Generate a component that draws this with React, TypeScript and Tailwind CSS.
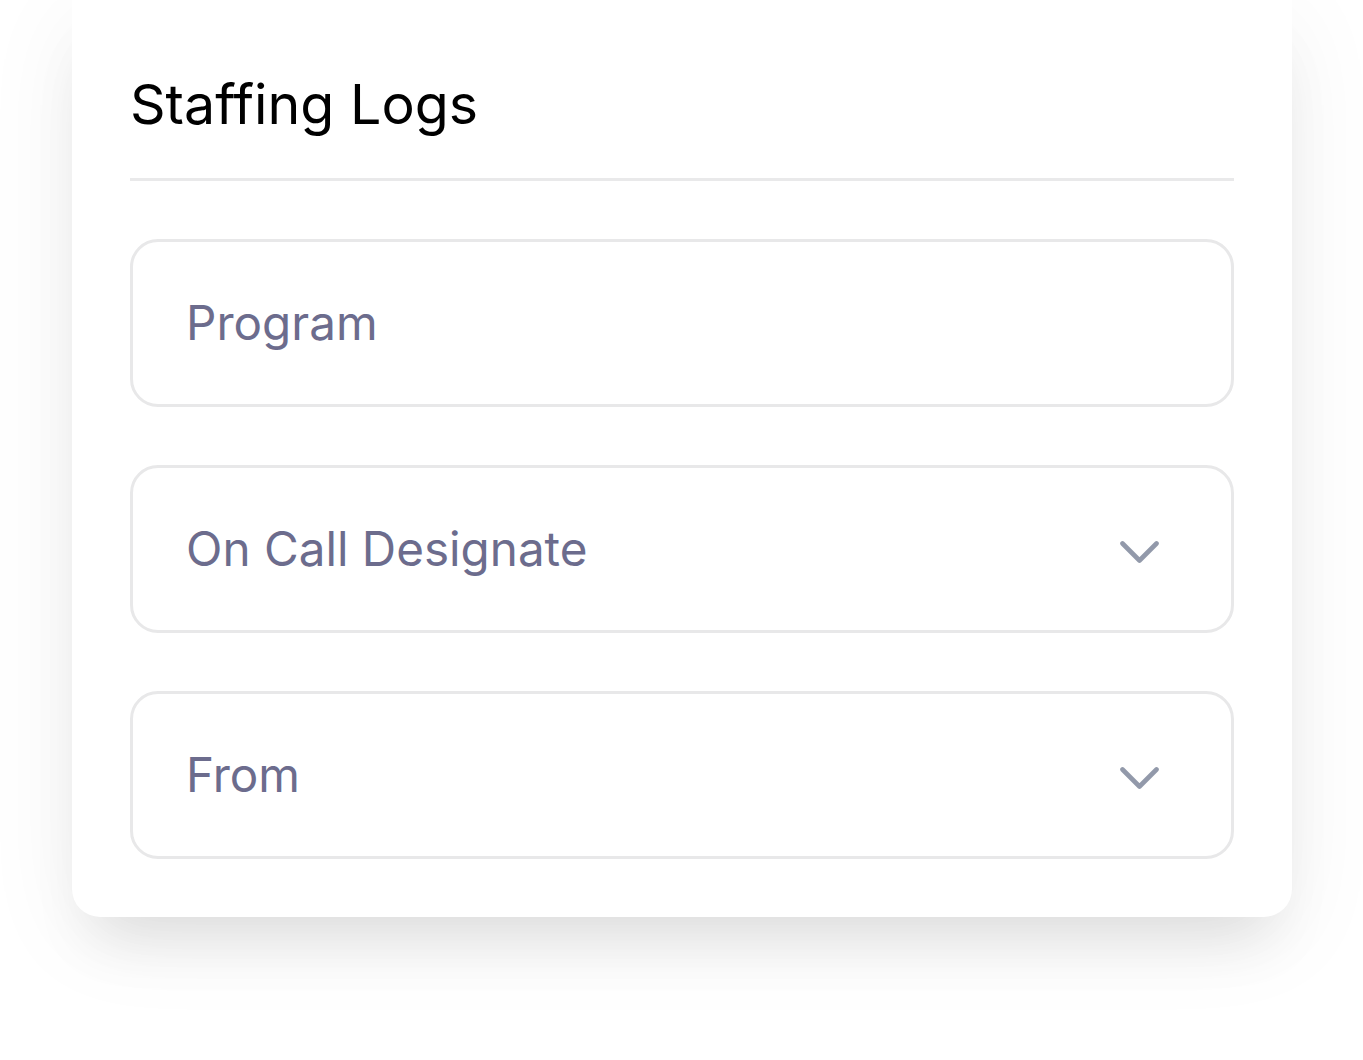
const fields = [
  { label: "Program", dropdown: false },
  { label: "On Call Designate", dropdown: true },
  { label: "From", dropdown: true },
];

const Chevron = () => (
  <svg className="mt-[5px]" width="39" height="22" viewBox="0 0 39 22" fill="none">
    <path
      d="M2.5 2.5 L19.5 19.5 L36.5 2.5"
      stroke="#9299aa"
      strokeWidth="4.6"
      strokeLinecap="round"
      strokeLinejoin="round"
    />
  </svg>
);

export default function App() {
  return (
    <div className="min-h-[1060px] bg-white pl-[72px] font-['Inter',sans-serif]">
      <div className="w-[1220px] rounded-b-[28px] bg-white px-[58px] pt-[62px] pb-[58px] shadow-[0_40px_60px_-20px_rgba(0,0,0,0.1),0_20px_100px_rgba(0,0,0,0.06)]">
        <h1 className="text-[55.5px] leading-[84px] font-normal text-black">Staffing Logs</h1>
        <div className="mt-[32px] h-[3px] bg-[#e9e9ea]" />
        <div className="mt-[58px] flex flex-col gap-[58px]">
          {fields.map((f) => (
            <div
              key={f.label}
              className="flex h-[168px] items-center justify-between rounded-[28px] border-[3px] border-[#e8e8e9] pl-[53px] pr-[72px]"
            >
              <span className="text-[47.6px] text-[#6c6c8d]">{f.label}</span>
              {f.dropdown && <Chevron />}
            </div>
          ))}
        </div>
      </div>
    </div>
  );
}
